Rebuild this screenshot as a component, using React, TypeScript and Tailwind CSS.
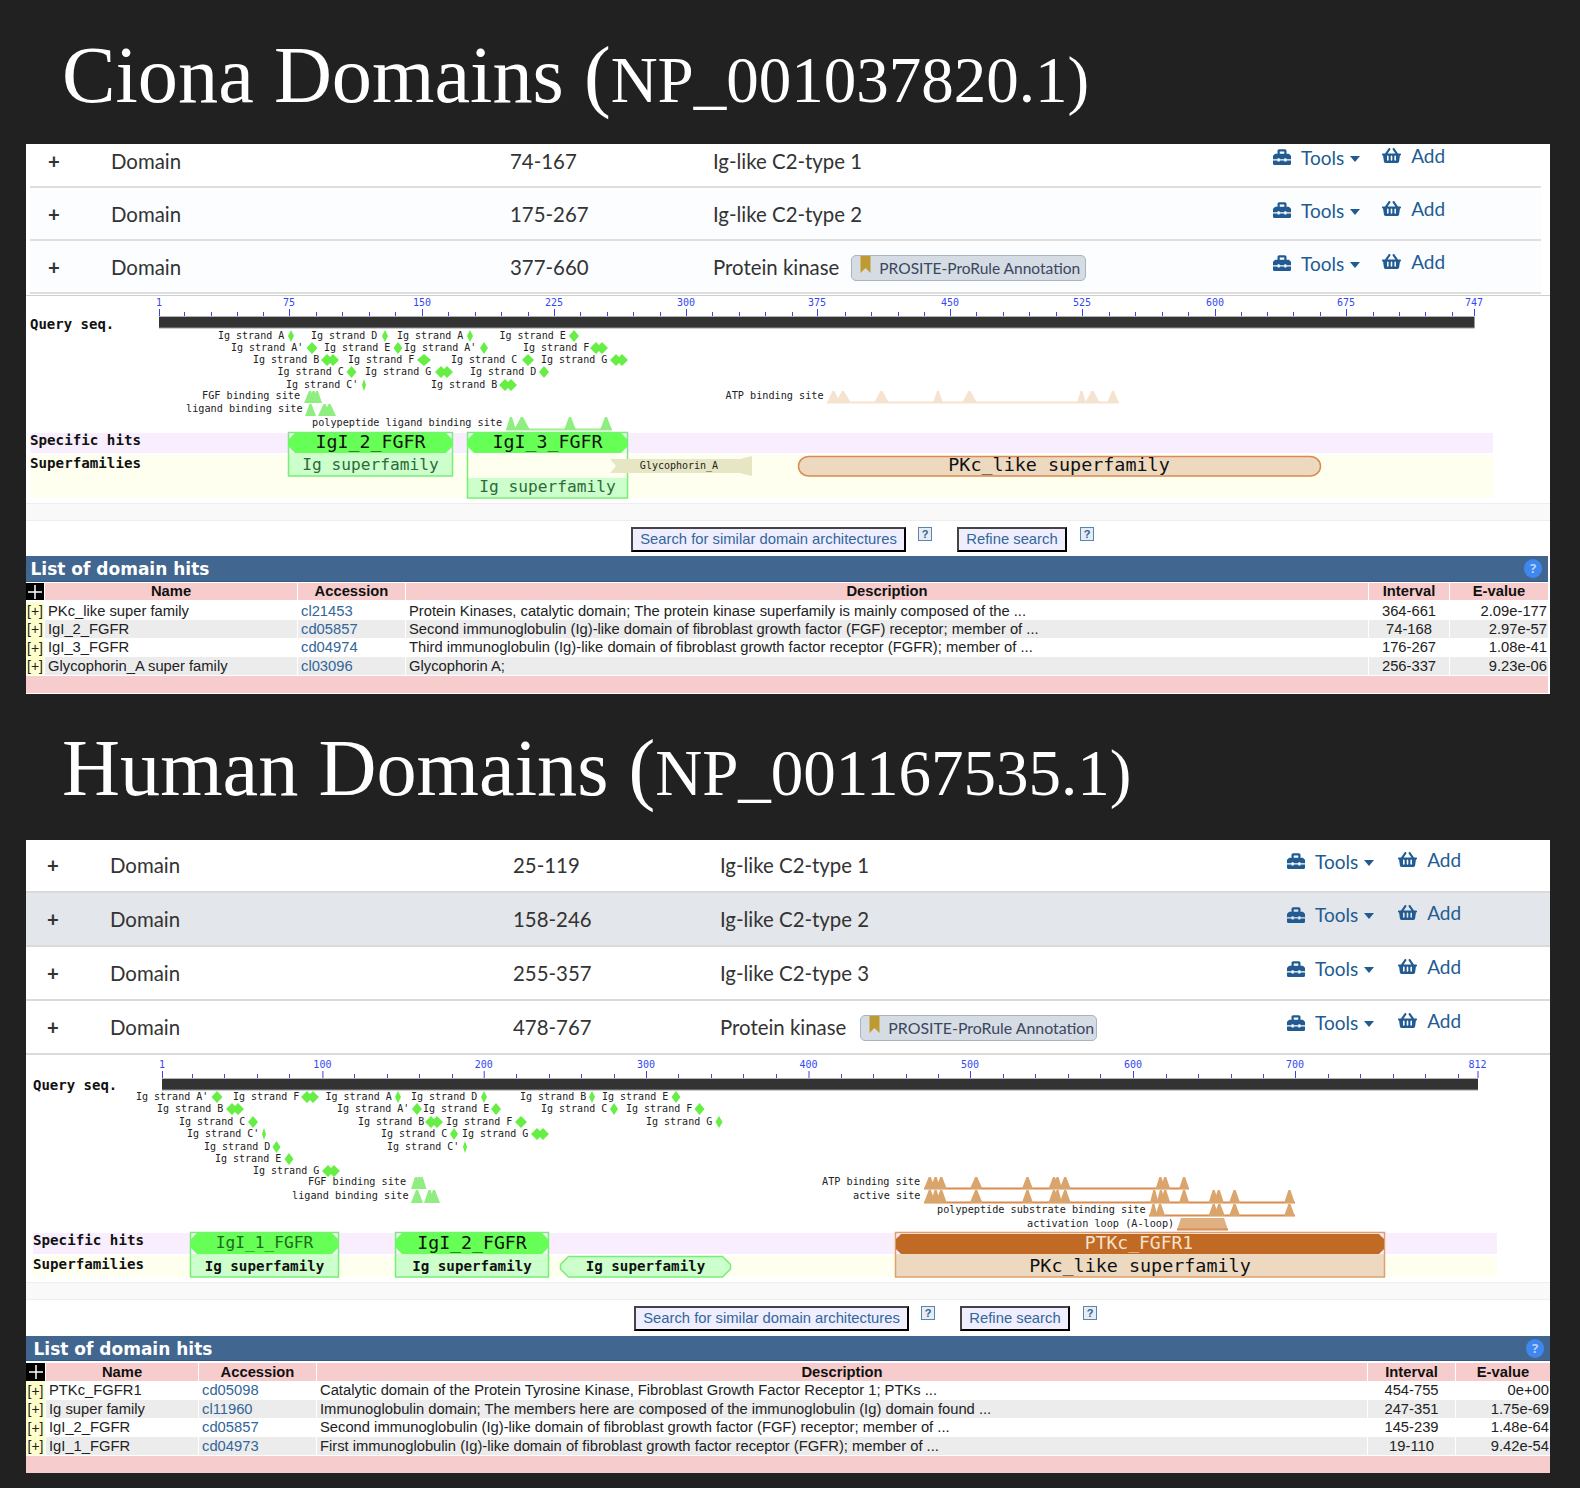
import React from "react";
import { FaToolbox, FaShoppingBasket } from "react-icons/fa";

const MONO = "'DejaVu Sans Mono', monospace";

type Strand = [string, number, number, number, number]; // label, text x, row y, diamond x, half-width (0 = double)
const chamfer = (a: number, b: number, t: number, u: number, c: number) =>
  `${a + c},${t} ${b - c},${t} ${b},${t + c} ${b},${u - c} ${b - c},${u} ${a + c},${u} ${a},${u - c} ${a},${t + c}`;

function Label({ x, y, size = 10, fill = "#222", bold = false, anchor = "start", children }: any) {
  return (
    <text x={x} y={y} fontFamily={MONO} fontSize={size} fontWeight={bold ? 700 : 400} fill={fill} textAnchor={anchor}>
      {children}
    </text>
  );
}

function Strands({ items }: { items: Strand[] }) {
  return (
    <>
      {items.map(([t, x, y, dx, hw], i) => (
        <g key={i}>
          <Label x={x} y={y + 2.5}>{t}</Label>
          {hw === 0 ? (
            <polygon points={`${dx - 9},${y} ${dx - 3},${y - 6} ${dx},${y - 3} ${dx + 3},${y - 6} ${dx + 9},${y} ${dx + 3},${y + 6} ${dx},${y + 3} ${dx - 3},${y + 6}`} fill="#66ee44" />
          ) : (
            <polygon points={`${dx - hw},${y} ${dx},${y - 6} ${dx + hw},${y} ${dx},${y + 6}`} fill="#66ee44" />
          )}
        </g>
      ))}
    </>
  );
}

function Sites({ tris, top, base, fill, line, x1, x2 }: { tris: [number, number][]; top: number; base: number; fill: string; line?: string; x1?: number; x2?: number }) {
  return (
    <>
      {line && <rect x={x1} y={base - 1.5} width={(x2 as number) - (x1 as number)} height={2} fill={line} />}
      {tris.map(([a, b], i) => (
        <polygon key={i} points={`${a},${base} ${(a + b) / 2 - 1},${top} ${(a + b) / 2 + 1},${top} ${b},${base}`} fill={fill} />
      ))}
    </>
  );
}

function Ruler({ ticks, majors, left, right, y }: { ticks: number[]; majors: [string, number][]; left: number; right: number; y: number }) {
  return (
    <>
      <rect x={left} y={y} width={right - left} height={1} fill="#b5b5b5" />
      <rect x={left} y={y + 1} width={right - left} height={11} fill="#333333" />
      <rect x={left} y={y + 11.5} width={right - left} height={1} fill="#999" />
      {ticks.map((x, i) => (
        <rect key={i} x={x} y={y - 4} width={1} height={4} fill="#3a44e8" />
      ))}
      {majors.map(([t, x], i) => (
        <g key={i}>
          <rect x={x} y={y - 7} width={1} height={7} fill="#3a44e8" />
          <text x={x} y={y - 10} fontFamily={MONO} fontSize={10} fill="#3348f0" textAnchor="middle">{t}</text>
        </g>
      ))}
    </>
  );
}

function CionaGraphic() {
  const strands: Strand[] = [
    ["Ig strand A", 218, 336, 291, 3], ["Ig strand D", 311, 336, 385, 3], ["Ig strand A", 397, 336, 470, 3], ["Ig strand E", 499.5, 336, 574, 5],
    ["Ig strand A'", 231, 348, 312, 5.5], ["Ig strand E", 324, 348, 398, 4.5], ["Ig strand A'", 404, 348, 484, 4], ["Ig strand F", 523, 348, 599, 0],
    ["Ig strand B", 253, 360, 330, 0], ["Ig strand F", 348, 360, 424, 7], ["Ig strand C", 451, 360, 528, 6], ["Ig strand G", 541, 360, 619, 0],
    ["Ig strand C", 277.5, 372, 351.5, 5], ["Ig strand G", 365, 372, 444, 0], ["Ig strand D", 470, 372, 544, 5],
    ["Ig strand C'", 286, 385, 364, 2], ["Ig strand B", 431, 385, 508, 0],
  ];
  return (
    <svg viewBox="26 296 1524 207" className="block w-full h-[207px]">
      <rect x="30.5" y="433" width="1462.5" height="20" fill="#f9eefd" />
      <rect x="30.5" y="455" width="1462.5" height="43" fill="#fffff0" />
      <Label x={30} y={329} size={14} bold fill="#111">Query seq.</Label>
      <Ruler y={316} left={159} right={1474.5} ticks={[184, 211, 237, 263, 316, 342, 369, 395, 448, 475, 501, 528, 580, 607, 633, 660, 712, 739, 765, 792, 845, 871, 898, 924, 976, 1003, 1029, 1056, 1109, 1135, 1162, 1188, 1241, 1267, 1293, 1320, 1373, 1399, 1425, 1452]}
        majors={[["1", 159], ["75", 289], ["150", 422], ["225", 554], ["300", 686], ["375", 817], ["450", 950], ["525", 1082], ["600", 1215], ["675", 1346], ["747", 1474]]} />
      <Strands items={strands} />
      <Label x={202} y={399} size={10.2}>FGF binding site</Label>
      <Sites tris={[[304, 316], [308, 319], [312, 322]]} top={391} base={403} fill="#8fee80" />
      <Label x={186} y={412} size={10.2}>ligand binding site</Label>
      <Sites tris={[[305, 316], [318, 331], [323, 336]]} top={404} base={416} fill="#8fee80" />
      <Label x={312} y={426} size={10.2}>polypeptide ligand binding site</Label>
      <Sites tris={[[506, 516], [514, 530], [564, 576], [600, 612]]} top={417} base={430} fill="#8fee80" line="#9fee90" x1={506} x2={612} />
      <Label x={725.5} y={399} size={10.2}>ATP binding site</Label>
      <Sites tris={[[827, 840], [835, 851], [874, 889], [933, 943], [962, 977], [1077, 1086], [1085, 1100], [1107, 1119]]} top={391} base={403} fill="#f5e3d0" line="#f5e3d0" x1={827} x2={1119} />
      <Label x={30} y={445} size={14.2} bold fill="#111">Specific hits</Label>
      <Label x={30} y={468} size={14.2} bold fill="#111">Superfamilies</Label>

      <rect x="288.5" y="453" width="164" height="23" fill="#ccffcc" />
      <rect x="288.5" y="432.5" width="164" height="43.5" fill="none" stroke="#77ee77" strokeWidth="1.5" />
      <polygon points={chamfer(289, 452, 433, 453, 6)} fill="#66ff55" />
      <Label x={370.5} y={448} size={18.3} fill="#111" anchor="middle">IgI_2_FGFR</Label>
      <Label x={370.5} y={470} size={16.2} fill="#2f6a3a" anchor="middle">Ig superfamily</Label>

      <rect x="467.5" y="478" width="160" height="20" fill="#ccffcc" />
      <rect x="467.5" y="432.5" width="160" height="65.5" fill="none" stroke="#77ee77" strokeWidth="1.5" />
      <polygon points={chamfer(468, 627, 433, 453, 6)} fill="#66ff55" />
      <Label x={547.5} y={448} size={18.3} fill="#111" anchor="middle">IgI_3_FGFR</Label>
      <Label x={547.5} y={492} size={16.2} fill="#2f6a3a" anchor="middle">Ig superfamily</Label>

      <polygon points="610,459 740,459 752,456 752,476 740,473 610,473 616,466" fill="#e6e6c4" />
      <Label x={679} y={469} size={10} anchor="middle">Glycophorin_A</Label>

      <rect x="798.5" y="456.5" width="522" height="19.5" rx="10" fill="#ecd9c0" stroke="#d98b50" strokeWidth="1.5" />
      <Label x={1059} y={471} size={18.4} fill="#111" anchor="middle">PKc_like superfamily</Label>
    </svg>
  );
}

function HumanGraphic() {
  const strands: Strand[] = [
    ["Ig strand A'", 136, 1097, 217, 5.5], ["Ig strand F", 233, 1097, 310, 0], ["Ig strand A", 325.5, 1097, 398, 3], ["Ig strand D", 411, 1097, 484, 3], ["Ig strand B", 520, 1097, 592, 3], ["Ig strand E", 602, 1097, 676, 4.5],
    ["Ig strand B", 157, 1109, 235, 0], ["Ig strand A'", 337, 1109, 417, 5], ["Ig strand E", 423, 1109, 496, 5], ["Ig strand C", 541, 1109, 614, 4], ["Ig strand F", 626, 1109, 699.5, 5],
    ["Ig strand C", 179, 1122, 253, 5], ["Ig strand B", 358, 1122, 434, 0], ["Ig strand F", 446, 1122, 521, 6], ["Ig strand G", 646, 1122, 719, 3.5],
    ["Ig strand C'", 187, 1134, 264, 2], ["Ig strand C", 381, 1134, 454, 4], ["Ig strand G", 462, 1134, 540, 0],
    ["Ig strand D", 204, 1147, 276.5, 4], ["Ig strand C'", 387, 1147, 465, 2],
    ["Ig strand E", 215, 1159, 289, 4.5],
    ["Ig strand G", 253, 1171, 331, 0],
  ];
  const bx = (v: number) => 780 + v / 1.96;
  const pairs = (l: [number, number][]) => l.map(([a, b]) => [bx(a), bx(b)] as [number, number]);
  const br = "#d9a56c";
  const ln = "#d98b50";
  const atp: [number, number][] = [[282, 305], [295, 315], [305, 327], [372, 397], [474, 496], [526, 548], [535, 553], [548, 570], [736, 755], [745, 765], [782, 802]];
  const act: [number, number][] = [[282, 305], [295, 315], [305, 327], [372, 397], [474, 496], [526, 548], [535, 553], [548, 570], [725, 742], [738, 755], [745, 765], [782, 802], [840, 860], [850, 870], [880, 902], [988, 1009]];
  const poly: [number, number][] = [[724, 740], [735, 755], [840, 860], [850, 872], [880, 902], [988, 1009]];
  return (
    <svg viewBox="26 1055 1524 227" className="block w-full h-[227px]">
      <rect x="33" y="1233" width="1464" height="21" fill="#f9eefd" />
      <rect x="33" y="1256" width="1464" height="21" fill="#fffff0" />
      <Label x={33} y={1090} size={14} bold fill="#111">Query seq.</Label>
      <Ruler y={1078} left={162} right={1478} ticks={[192, 224, 257, 289, 354, 387, 419, 452, 516, 549, 581, 614, 678, 711, 743, 776, 841, 873, 906, 938, 1003, 1035, 1068, 1100, 1166, 1198, 1231, 1263, 1328, 1360, 1393, 1425, 1458]}
        majors={[["1", 162], ["100", 322.4], ["200", 483.7], ["300", 646], ["400", 808.5], ["500", 970], ["600", 1133], ["700", 1295], ["812", 1477.5]]} />
      <Strands items={strands} />
      <Label x={308} y={1185} size={10.2}>FGF binding site</Label>
      <Sites tris={[[411, 421], [414, 424], [417, 426.5]]} top={1177} base={1189} fill="#8fee80" />
      <Label x={292} y={1199} size={10.2}>ligand binding site</Label>
      <Sites tris={[[411, 423], [424, 435], [428, 440]]} top={1190} base={1203} fill="#8fee80" />
      <Label x={822} y={1185} size={10.2}>ATP binding site</Label>
      <Sites tris={pairs(atp)} top={1177} base={1189} fill={br} line={ln} x1={924} x2={1189} />
      <Label x={853} y={1199} size={10.2}>active site</Label>
      <Sites tris={pairs(act)} top={1190} base={1203} fill={br} line={ln} x1={924} x2={1295} />
      <Label x={937} y={1213} size={10.2}>polypeptide substrate binding site</Label>
      <Sites tris={pairs(poly)} top={1204} base={1216} fill={br} line={ln} x1={1149} x2={1295} />
      <Label x={1027} y={1227} size={10.2}>activation loop (A-loop)</Label>
      <polygon points="1177,1230 1181,1218 1224,1218 1228,1230" fill="#deb082" />
      <rect x="1177" y="1228.5" width="51" height="2" fill={ln} />
      <Label x={33} y={1245} size={14.2} bold fill="#111">Specific hits</Label>
      <Label x={33} y={1269} size={14.2} bold fill="#111">Superfamilies</Label>

      <rect x="190.5" y="1254" width="148" height="23" fill="#ccffcc" />
      <rect x="190.5" y="1232.5" width="148" height="44.5" fill="none" stroke="#77ee77" strokeWidth="1.5" />
      <polygon points={chamfer(191, 338, 1233, 1254, 6)} fill="#66ff55" />
      <Label x={264.5} y={1247.5} size={16.2} fill="#1d6a1d" anchor="middle">IgI_1_FGFR</Label>
      <Label x={264.5} y={1271} size={14.2} bold fill="#111" anchor="middle">Ig superfamily</Label>

      <rect x="395.5" y="1254" width="153" height="23" fill="#ccffcc" />
      <rect x="395.5" y="1232.5" width="153" height="44.5" fill="none" stroke="#77ee77" strokeWidth="1.5" />
      <polygon points={chamfer(396, 548, 1233, 1254, 6)} fill="#66ff55" />
      <Label x={472} y={1248.5} size={18.2} fill="#111" anchor="middle">IgI_2_FGFR</Label>
      <Label x={472} y={1271} size={14.2} bold fill="#111" anchor="middle">Ig superfamily</Label>

      <polygon points={chamfer(560.5, 730.5, 1256.5, 1277, 8)} fill="#ccffcc" stroke="#77ee77" strokeWidth="1.5" />
      <Label x={645.5} y={1271} size={14.2} bold fill="#111" anchor="middle">Ig superfamily</Label>

      <rect x="895.5" y="1254" width="489" height="23" fill="#ecd9c0" />
      <rect x="895.5" y="1232.5" width="489" height="44.5" fill="none" stroke="#dfa06c" strokeWidth="1.5" />
      <polygon points={chamfer(896, 1384, 1234, 1254, 5)} fill="#c06a25" />
      <Label x={1139} y={1248.5} size={18} fill="#f7e2cc" anchor="middle">PTKc_FGFR1</Label>
      <Label x={1140} y={1272} size={18.4} fill="#111" anchor="middle">PKc_like superfamily</Label>
    </svg>
  );
}

function Actions({ wide }: { wide?: boolean }) {
  return (
    <div className="flex items-center text-[#225b92] h-[20px] leading-none mb-[9px]">
      <FaToolbox className="w-[20px] h-[18px]" />
      <span className="ml-[9px] text-[19px]">Tools</span>
      <svg viewBox="0 0 10 6" className="ml-[6px] mt-[3px] w-[10px] h-[6px]"><polygon points="0,0 10,0 5,6" fill="#225b92" /></svg>
      <FaShoppingBasket className={`w-[19px] h-[17px] mb-[4px] ${wide ? "ml-[24px]" : "ml-[22px]"}`} />
      <span className="ml-[10px] text-[19px] mb-[4px]">Add</span>
    </div>
  );
}

function Badge({ big }: { big?: boolean }) {
  return (
    <span className={`flex items-center h-[26px] rounded-[5px] border border-[#a9b4be] bg-[#d5dce3] text-[#3b4660] pl-[8px] relative top-[1px] ${big ? "ml-[14px] w-[237px] text-[15.9px]" : "ml-[12px] w-[235px] text-[15.5px]"}`}>
      <svg viewBox="0 0 10 17" className="w-[11px] h-[17px] self-start shrink-0"><polygon points="0,0 10,0 10,17 5,12 0,17" fill="#bf9a30" /></svg>
      <span className="ml-[8px] whitespace-nowrap">PROSITE-ProRule Annotation</span>
    </span>
  );
}

type Row = { pos: string; label: string; badge?: boolean };

function CionaRows({ rows }: { rows: Row[] }) {
  return (
    <div className="font-['Lato',sans-serif] text-[20.4px] text-[#333]">
      {rows.map((r, i) => (
        <div key={i} className={`ml-[4px] mr-[9px] pl-[18px] grid grid-cols-[63px_399px_203px_559px_1fr] items-center border-b-2 border-[#dedede] ${i === 0 ? "h-[44px] pb-[7px]" : "h-[53px] pt-[2px] bg-[#fbfdff]"}`}>
          <span className="font-bold">+</span>
          <span>Domain</span>
          <span>{r.pos}</span>
          <span className="flex items-center">{r.label}{r.badge && <Badge />}</span>
          <Actions />
        </div>
      ))}
      <div className="h-[2px] border-b border-[#cfcfcf]" />
    </div>
  );
}

function HumanRows({ rows }: { rows: Row[] }) {
  return (
    <div className="font-['Lato',sans-serif] text-[20.4px] text-[#333]">
      {rows.map((r, i) => (
        <div key={i} className={`pl-[21px] grid grid-cols-[63px_403px_207px_566px_1fr] items-center border-b-2 border-[#dadada] ${i === 0 ? "h-[53px]" : "h-[54px]"} ${i === 1 ? "bg-[#e3e6ea]" : "bg-white"}`}>
          <span className="font-bold">+</span>
          <span>Domain</span>
          <span>{r.pos}</span>
          <span className="flex items-center">{r.label}{r.badge && <Badge big />}</span>
          <Actions wide />
        </div>
      ))}
    </div>
  );
}

function Help() {
  return (
    <span className="flex items-center justify-center w-[14px] h-[14px] border border-[#5b84ad] bg-[#e4ecf6] text-[#36608c] text-[11px] leading-none font-bold">?</span>
  );
}

function SearchBar({ pad, h }: { pad: string; h: string }) {
  return (
    <div className={`flex items-start pt-[6px] font-['Liberation_Sans',sans-serif] ${pad} ${h}`}>
      <button className="w-[275px] h-[25px] border-2 border-[#444] border-b-black border-r-black bg-[#eeeeff] text-[#336699] text-[14.8px] leading-none whitespace-nowrap">Search for similar domain architectures</button>
      <span className="ml-[12px]"><Help /></span>
      <button className="ml-[25px] w-[110px] h-[25px] border-2 border-[#444] border-b-black border-r-black bg-[#eeeeff] text-[#336699] text-[14.8px] leading-none whitespace-nowrap">Refine search</button>
      <span className="ml-[13px]"><Help /></span>
    </div>
  );
}

function BlueBar({ h, pad }: { h: string; pad: string }) {
  return (
    <div className={`flex items-center justify-between bg-[#41668f] border-b border-[#2f5a8a] pr-[6px] ${pad} ${h}`}>
      <span className="font-['DejaVu_Sans',sans-serif] font-bold text-white text-[17px] pt-[3px]">List of domain hits</span>
      <span className="flex items-center justify-center w-[18px] h-[19px] rounded-full bg-[#3f86ee] text-[#b9d4ff] text-[13px] font-bold leading-none">?</span>
    </div>
  );
}

type Hit = [string, string, string, string, string];

function HitsTable({ hits, cols, headerClass, rowHeights, gapTop }: { hits: Hit[]; cols: string; headerClass: string; rowHeights: string[]; gapTop: string }) {
  return (
    <div className="font-['Liberation_Sans',sans-serif] text-[14.75px] text-[#222]">
      <div className={`grid gap-x-[1px] bg-white leading-none font-bold text-[#111] ${cols} ${headerClass}`}>
        <span className="flex items-center justify-center bg-black">
          <svg viewBox="0 0 14 14" className="w-[14px] h-[14px]"><path d="M7 0V14M0 7H14" stroke="#fff" strokeWidth="1.5" /></svg>
        </span>
        {["Name", "Accession", "Description", "Interval", "E-value"].map((h) => (
          <span key={h} className="flex items-center justify-center bg-[#f6cccc]">{h}</span>
        ))}
      </div>
      <div className={gapTop}>
        {hits.map((h, i) => (
          <div key={i} className={`grid gap-x-[1px] items-stretch leading-none ${cols} ${rowHeights[i]}`}>
            <span className="flex items-center justify-center bg-[#ffffcc] text-[14px]">[+]</span>
            {[h[0], h[1], h[2]].map((t, j) => (
              <span key={j} className={`flex items-center pl-[3px] whitespace-nowrap ${i % 2 ? "bg-[#ececec]" : "bg-white"} ${j === 1 ? "text-[#336699]" : ""}`}>{t}</span>
            ))}
            <span className={`flex items-center justify-center ${i % 2 ? "bg-[#ececec]" : "bg-white"}`}>{h[3]}</span>
            <span className={`flex items-center justify-end pr-[1px] ${i % 2 ? "bg-[#ececec]" : "bg-white"}`}>{h[4]}</span>
          </div>
        ))}
      </div>
    </div>
  );
}

function Heading({ a, b, h, pt }: { a: string; b: string; h: string; pt: string }) {
  return (
    <div className={`pl-[62px] font-['Liberation_Serif',serif] text-white text-[80.3px] leading-[80px] whitespace-nowrap ${h} ${pt}`}>
      {a} (<span className="text-[65px]">{b})</span>
    </div>
  );
}

export default function App() {
  return (
    <div className="min-h-[1488px] bg-[#212121] pb-[15px]">
      <Heading a="Ciona Domains" b="NP_001037820.1" h="h-[144px]" pt="pt-[35px]" />
      <div className="ml-[26px] w-[1524px] bg-white">
        <CionaRows rows={[{ pos: "74-167", label: "Ig-like C2-type 1" }, { pos: "175-267", label: "Ig-like C2-type 2" }, { pos: "377-660", label: "Protein kinase", badge: true }]} />
        <CionaGraphic />
        <div className="h-[18px] bg-[#f9f9f9] border-y border-[#eeeeee]" />
        <SearchBar pad="pl-[605px]" h="h-[35px]" />
        <div className="mr-[2px]">
          <BlueBar h="h-[26px]" pad="pl-[4.5px]" />
          <HitsTable
            cols="grid-cols-[18px_252px_107px_1fr_80px_98px]"
            headerClass="mt-[1px] h-[17px]"
            gapTop="mt-[2px]"
            rowHeights={["h-[18px]", "h-[18px]", "h-[19px]", "h-[18px]"]}
            hits={[
              ["PKc_like super family", "cl21453", "Protein Kinases, catalytic domain; The protein kinase superfamily is mainly composed of the ...", "364-661", "2.09e-177"],
              ["IgI_2_FGFR", "cd05857", "Second immunoglobulin (Ig)-like domain of fibroblast growth factor (FGF) receptor; member of ...", "74-168", "2.97e-57"],
              ["IgI_3_FGFR", "cd04974", "Third immunoglobulin (Ig)-like domain of fibroblast growth factor receptor (FGFR); member of ...", "176-267", "1.08e-41"],
              ["Glycophorin_A super family", "cl03096", "Glycophorin A;", "256-337", "9.23e-06"],
            ]}
          />
          <div className="mt-[1px] h-[17px] bg-[#f6cccc]" />
        </div>
        <div className="h-[1px]" />
      </div>

      <Heading a="Human Domains" b="NP_001167535.1" h="h-[146px]" pt="pt-[34px]" />
      <div className="ml-[26px] w-[1524px] bg-white">
        <HumanRows rows={[{ pos: "25-119", label: "Ig-like C2-type 1" }, { pos: "158-246", label: "Ig-like C2-type 2" }, { pos: "255-357", label: "Ig-like C2-type 3" }, { pos: "478-767", label: "Protein kinase", badge: true }]} />
        <HumanGraphic />
        <div className="h-[18px] bg-[#f9f9f9] border-y border-[#eeeeee]" />
        <SearchBar pad="pl-[608px]" h="h-[36px]" />
        <BlueBar h="h-[25px]" pad="pl-[7.5px]" />
        <HitsTable
          cols="grid-cols-[19px_152px_117px_1fr_87px_94px]"
          headerClass="mt-[2px] h-[18px]"
          gapTop=""
          rowHeights={["h-[19px]", "h-[18px]", "h-[19px]", "h-[18px]"]}
          hits={[
            ["PTKc_FGFR1", "cd05098", "Catalytic domain of the Protein Tyrosine Kinase, Fibroblast Growth Factor Receptor 1; PTKs ...", "454-755", "0e+00"],
            ["Ig super family", "cl11960", "Immunoglobulin domain; The members here are composed of the immunoglobulin (Ig) domain found ...", "247-351", "1.75e-69"],
            ["IgI_2_FGFR", "cd05857", "Second immunoglobulin (Ig)-like domain of fibroblast growth factor (FGF) receptor; member of ...", "145-239", "1.48e-64"],
            ["IgI_1_FGFR", "cd04973", "First immunoglobulin (Ig)-like domain of fibroblast growth factor receptor (FGFR); member of ...", "19-110", "9.42e-54"],
          ]}
        />
        <div className="mt-[1px] h-[17px] bg-[#f6cccc]" />
      </div>
    </div>
  );
}
